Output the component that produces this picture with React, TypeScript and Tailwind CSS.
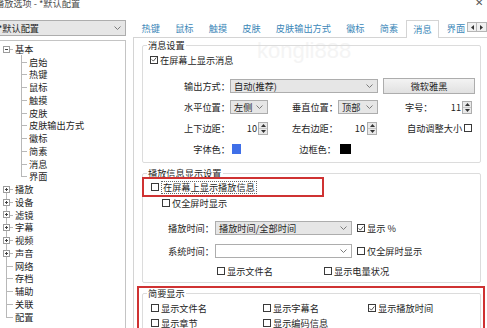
import React from 'react';

const Chev = () => (
  <svg width="7" height="4" viewBox="0 0 7 4" className="shrink-0">
    <path d="M0.5 0.5 L3.5 3.5 L6.5 0.5" fill="none" stroke="#7a7a7a" strokeWidth="1" />
  </svg>
);

function Check({ on = false }: { on?: boolean }) {
  return (
    <span className="inline-flex w-[8px] h-[8px] shrink-0 items-center justify-center border border-[#3a3a3a] bg-white">
      {on && (
        <svg width="7" height="7" viewBox="0 0 7 7">
          <path d="M0.8 3.4 L2.8 5.4 L6.2 1.2" fill="none" stroke="#222" strokeWidth="0.9" />
        </svg>
      )}
    </span>
  );
}

function Select({ text = '', w, white = false }: { text?: string; w: string; white?: boolean }) {
  return (
    <div
      className={`${w} h-[14px] flex items-center justify-between border border-[#adadad] pl-[3px] pr-[4px] leading-[12px] ${
        white ? 'bg-white' : 'bg-[#e6e6e6]'
      }`}
    >
      <span className="whitespace-nowrap">{text}</span>
      <Chev />
    </div>
  );
}

function Spin({ ml = 'ml-[1px]' }: { ml?: string }) {
  return (
    <div className={`${ml} flex flex-col w-[10px] h-[13px] border border-[#adadad] bg-[#e9e9e9]`}>
      <div className="flex-1 flex items-center justify-center border-b border-[#c6c6c6]">
        <svg width="5" height="3" viewBox="0 0 5 3"><path d="M0 3 L2.5 0 L5 3Z" fill="#333" /></svg>
      </div>
      <div className="flex-1 flex items-center justify-center">
        <svg width="5" height="3" viewBox="0 0 5 3"><path d="M0 0 L2.5 3 L5 0Z" fill="#333" /></svg>
      </div>
    </div>
  );
}

function Label({ w, children }: { w: string; children: React.ReactNode }) {
  return <div className={`${w} shrink-0 text-right whitespace-nowrap leading-[12px]`}>{children}</div>;
}

type Node = { t: string; lvl: 0 | 1; box?: '+' | '-'; last?: boolean; root?: 'start' | 'mid' | 'end' };

const tree: Node[] = [
  { t: '基本', lvl: 0, box: '-' },
  { t: '启始', lvl: 1 },
  { t: '热键', lvl: 1 },
  { t: '鼠标', lvl: 1 },
  { t: '触摸', lvl: 1 },
  { t: '皮肤', lvl: 1 },
  { t: '皮肤输出方式', lvl: 1 },
  { t: '徽标', lvl: 1 },
  { t: '简素', lvl: 1 },
  { t: '消息', lvl: 1 },
  { t: '界面', lvl: 1, last: true },
  { t: '播放', lvl: 0, box: '+', root: 'start' },
  { t: '设备', lvl: 0, box: '+', root: 'mid' },
  { t: '滤镜', lvl: 0, box: '+', root: 'mid' },
  { t: '字幕', lvl: 0, box: '+', root: 'mid' },
  { t: '视频', lvl: 0, box: '+', root: 'mid' },
  { t: '声音', lvl: 0, box: '+', root: 'mid' },
  { t: '网络', lvl: 0, root: 'mid' },
  { t: '存档', lvl: 0, root: 'mid' },
  { t: '辅助', lvl: 0, root: 'mid' },
  { t: '关联', lvl: 0, root: 'mid' },
  { t: '配置', lvl: 0, root: 'end' },
];

function TreeRow({ n }: { n: Node }) {
  return (
    <div className={`relative h-[12.76px] flex items-center leading-[12px] ${n.lvl === 0 ? 'pl-[15px]' : 'pl-[29px]'}`}>
      {n.root === 'start' && <span className="absolute left-[6px] top-1/2 bottom-0 w-px bg-[#b8b8b8]" />}
      {n.root === 'mid' && <span className="absolute left-[6px] top-0 bottom-0 w-px bg-[#b8b8b8]" />}
      {n.root === 'end' && <span className="absolute left-[6px] top-0 h-1/2 w-px bg-[#b8b8b8]" />}
      {n.lvl === 0 && <span className="absolute left-[6px] top-1/2 w-[7px] h-px bg-[#b8b8b8]" />}
      {n.box && (
        <span className="absolute left-[3px] top-[3px] w-[7px] h-[7px] border border-[#9c9c9c] bg-white flex items-center justify-center">
          <span className="relative w-[3px] h-px bg-[#444]">
            {n.box === '+' && <span className="absolute left-[1px] -top-[1px] w-px h-[3px] bg-[#444]" />}
          </span>
        </span>
      )}
      {n.lvl === 1 && (
        <>
          <span className={`absolute left-[21px] top-0 w-px bg-[#b8b8b8] ${n.last ? 'h-1/2' : 'bottom-0'}`} />
          <span className="absolute left-[21px] top-1/2 w-[6px] h-px bg-[#b8b8b8]" />
        </>
      )}
      <span className="whitespace-nowrap">{n.t}</span>
    </div>
  );
}

const tabs = ['热键', '鼠标', '触摸', '皮肤', '皮肤输出方式', '徽标', '简素', '消息', '界面'];

export default function App() {
  return (
    <div className="w-[487px] h-[328px] overflow-hidden bg-white text-[#1e1e1e] text-[9.2px] font-['Noto_Sans_CJK_SC','Noto_Sans',sans-serif] flex flex-col">
      {/* title bar */}
      <div className="h-[20px] shrink-0 flex justify-between items-start">
        <div className="-ml-[5px] -mt-[2px] leading-[10px] text-[#4a4a4a] whitespace-nowrap">播放选项 - *默认配置</div>
        <div className="mr-[4px] -mt-[3px] text-[10px] leading-[10px] text-[#555]">✕</div>
      </div>

      <div className="flex flex-1 min-h-0">
        {/* left column */}
        <div className="w-[126px] shrink-0 flex flex-col">
          <div className="h-[16px] border-y border-r border-[#adadad] bg-[#e6e6e6] flex items-center justify-between pr-[4px]">
            <span className="-ml-[2px] leading-[12px] whitespace-nowrap">*默认配置</span>
            <Chev />
          </div>
          <div className="mt-[4px] flex-1 border-t border-r border-[#c4c4c4] pt-[1.6px]">
            {tree.map((n) => (
              <TreeRow key={n.t} n={n} />
            ))}
          </div>
        </div>

        {/* right column */}
        <div className="ml-[7px] flex-1 flex flex-col min-w-0">
          <div className="relative h-[17px] shrink-0 flex items-end pl-[1px]">
            {tabs.map((t) =>
              t === '消息' ? (
                <div
                  key={t}
                  className="relative z-10 h-[18px] -mb-px flex items-center px-[6.6px] pb-px bg-white border border-b-0 border-[#d4d4d4] text-[#3b87b8] leading-[12px] whitespace-nowrap"
                >
                  {t}
                </div>
              ) : (
                <div key={t} className="h-[17px] flex items-center px-[7.6px] pb-px text-[#3b87b8] leading-[12px] whitespace-nowrap">
                  {t}
                </div>
              )
            )}
            <div className="absolute right-0 top-[2px] z-20 flex">
              <div className="w-[10px] h-[10px] border border-[#b5b5b5] bg-[#f0f0f0] flex items-center justify-center">
                <svg width="3" height="5" viewBox="0 0 3 5"><path d="M3 0 L0 2.5 L3 5Z" fill="#333" /></svg>
              </div>
              <div className="w-[10px] h-[10px] border border-l-0 border-[#b5b5b5] bg-[#f0f0f0] flex items-center justify-center">
                <svg width="3" height="5" viewBox="0 0 3 5"><path d="M0 0 L3 2.5 L0 5Z" fill="#333" /></svg>
              </div>
            </div>
          </div>

          <div className="relative flex-1 border-t border-l border-[#d4d4d4] pl-[8px] pr-[6px] flex flex-col">
            {/* watermark */}
            <div className="absolute left-[123px] top-[1px] text-[22px] leading-[24px] text-[#f4f4f4] font-['Liberation_Sans',sans-serif] pointer-events-none">
              kongli888
            </div>

            {/* 消息设置 */}
            <fieldset className="relative mt-[1.5px] border border-[#dcdcdc] rounded-[2px] pb-[2px]">
              <legend className="ml-[4px] px-[1px] leading-[11px]">消息设置</legend>
              <div className="h-[18px] flex items-center pl-[7px] gap-[2px] leading-[12px]">
                <Check on />
                <span>在屏幕上显示消息</span>
              </div>
              <div className="mt-[7px] flex items-center h-[21px]">
                <Label w="w-[87px]">输出方式：</Label>
                <Select w="w-[148px]" text="自动(推荐)" />
                <div className="ml-[5px] w-[92px] h-[16px] border border-[#adadad] bg-gradient-to-b from-[#f3f3f3] to-[#e1e1e1] flex items-center justify-center leading-[12px]">
                  微软雅黑
                </div>
              </div>
              <div className="flex items-center h-[21px]">
                <Label w="w-[87px]">水平位置：</Label>
                <Select w="w-[38px]" text="左侧" />
                <Label w="w-[70px]">垂直位置：</Label>
                <Select w="w-[40px]" text="顶部" />
                <div className="w-[27px] shrink-0" />
                <div className="w-[30px] leading-[12px]">字号：</div>
                <div className="w-[26px] text-right leading-[12px]">11</div>
                <Spin />
              </div>
              <div className="flex items-center h-[21px]">
                <Label w="w-[87px]">上下边距：</Label>
                <div className="w-[27px] text-right leading-[12px]">10</div>
                <Spin />
                <Label w="w-[70px]">左右边距：</Label>
                <div className="w-[27px] text-right leading-[12px]">10</div>
                <Spin ml="ml-[2px]" />
                <div className="ml-[30px] leading-[12px] whitespace-nowrap">自动调整大小</div>
                <span className="ml-[2px] flex">
                  <Check />
                </span>
              </div>
              <div className="flex items-center h-[21px]">
                <Label w="w-[87px]">字体色：</Label>
                <div className="ml-[2px] w-[9px] h-[10px] bg-[#3f6fe8]" />
                <Label w="w-[95px]">边框色：</Label>
                <div className="ml-[4px] w-[11px] h-[10px] bg-black" />
              </div>
            </fieldset>

            {/* 播放信息显示设置 */}
            <fieldset className="relative mt-[5px] border border-[#dcdcdc] rounded-[2px] pb-[2px]">
              <legend className="ml-[4px] px-[1px] leading-[11px]">播放信息显示设置</legend>
              <div className="h-[17px] flex items-center pl-[8px] leading-[12px]">
                <Check />
                <span className="ml-[2px] border border-dotted border-[#666] px-px leading-[9px] py-px">在屏幕上显示播放信息</span>
              </div>
              <div className="h-[14px] flex items-center pl-[19px] gap-[2px] leading-[12px]">
                <Check />
                <span>仅全屏时显示</span>
              </div>
              <div className="mt-[7px] h-[23px] flex items-center">
                <Label w="w-[71px]">播放时间：</Label>
                <div className="ml-[1px]">
                  <Select w="w-[137px]" text="播放时间/全部时间" />
                </div>
                <span className="ml-[5px] flex">
                  <Check on />
                </span>
                <span className="ml-[2px] leading-[12px]">显示 %</span>
              </div>
              <div className="h-[23px] flex items-center">
                <Label w="w-[71px]">系统时间：</Label>
                <div className="ml-[1px]">
                  <Select w="w-[137px]" white />
                </div>
                <span className="ml-[5px] flex">
                  <Check />
                </span>
                <span className="ml-[2px] leading-[12px]">仅全屏时显示</span>
              </div>
              <div className="h-[17px] flex items-center pl-[74px] leading-[12px]">
                <div className="w-[107px] flex items-center gap-[2px]">
                  <Check />
                  <span>显示文件名</span>
                </div>
                <div className="flex items-center gap-[2px]">
                  <Check />
                  <span>显示电量状况</span>
                </div>
              </div>
            </fieldset>

            {/* 简要显示 */}
            <fieldset className="relative mt-[5px] border border-[#dcdcdc] rounded-[2px]">
              <legend className="ml-[4px] px-[1px] leading-[11px]">简要显示</legend>
              <div className="mt-[2px] h-[15px] flex items-center pl-[8px] leading-[12px]">
                <div className="w-[112px] flex items-center gap-[2px]"><Check /><span>显示文件名</span></div>
                <div className="w-[105px] flex items-center gap-[2px]"><Check /><span>显示字幕名</span></div>
                <div className="flex items-center gap-[2px]"><Check on /><span>显示播放时间</span></div>
              </div>
              <div className="h-[15px] flex items-center pl-[8px] leading-[12px]">
                <div className="w-[112px] flex items-center gap-[2px]"><Check /><span>显示章节</span></div>
                <div className="w-[105px] flex items-center gap-[2px]"><Check /><span>显示编码信息</span></div>
              </div>
            </fieldset>

            {/* red annotation boxes */}
            <div className="absolute left-[8px] top-[139px] w-[182px] h-[20px] border-2 border-[#cf3232] pointer-events-none" />
            <div className="absolute left-[3px] top-[248px] w-[348px] h-[60px] border-2 border-[#cf3232] pointer-events-none" />
          </div>
        </div>
      </div>
    </div>
  );
}
